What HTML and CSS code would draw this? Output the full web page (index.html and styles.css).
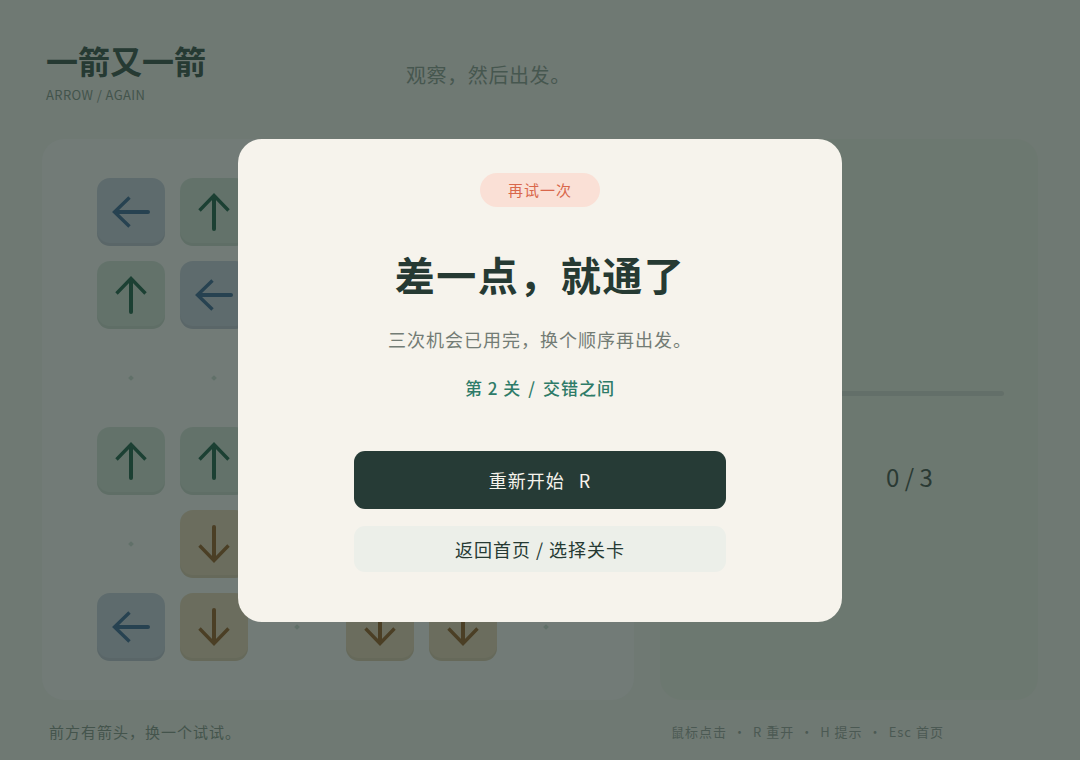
FILE: index.html
```html
<!DOCTYPE html>
<html lang="zh-CN">
  <head>
    <meta charset="UTF-8" />
    <meta name="viewport" content="width=device-width, initial-scale=1.0" />
    <title>一箭又一箭</title>
    <link rel="stylesheet" href="styles.css">
  </head>
  <body>
    <svg class="sprites" aria-hidden="true">
      <symbol id="arrow" viewBox="0 0 40 40">
        <path d="M20 37V5" fill="none" stroke="currentColor" stroke-width="4" stroke-linecap="round" />
        <path d="M5.5 18.5 20 3.5 34.5 18.5" fill="none" stroke="currentColor" stroke-width="3.4" stroke-linejoin="miter" />
      </symbol>
    </svg>

    <div class="app">
      <header class="top-bar">
        <div class="brand">
          <h1>一箭又一箭</h1>
          <p class="brand-sub">ARROW / AGAIN</p>
        </div>
        <p class="tagline">观察，然后出发。</p>
      </header>

      <main class="stage">
        <section class="board-panel">
          <div class="board">
            <!-- row 1 -->
            <div class="cell left"><svg class="arrow"><use href="#arrow" /></svg></div>
            <div class="cell up"><svg class="arrow"><use href="#arrow" /></svg></div>
            <div class="cell right"><svg class="arrow"><use href="#arrow" /></svg></div>
            <div class="cell down"><svg class="arrow"><use href="#arrow" /></svg></div>
            <div class="cell empty"></div>
            <div class="cell up"><svg class="arrow"><use href="#arrow" /></svg></div>
            <!-- row 2 -->
            <div class="cell up"><svg class="arrow"><use href="#arrow" /></svg></div>
            <div class="cell left"><svg class="arrow"><use href="#arrow" /></svg></div>
            <div class="cell empty"></div>
            <div class="cell right"><svg class="arrow"><use href="#arrow" /></svg></div>
            <div class="cell left"><svg class="arrow"><use href="#arrow" /></svg></div>
            <div class="cell empty"></div>
            <!-- row 3 -->
            <div class="cell empty"></div>
            <div class="cell empty"></div>
            <div class="cell down"><svg class="arrow"><use href="#arrow" /></svg></div>
            <div class="cell empty"></div>
            <div class="cell up"><svg class="arrow"><use href="#arrow" /></svg></div>
            <div class="cell right"><svg class="arrow"><use href="#arrow" /></svg></div>
            <!-- row 4 -->
            <div class="cell up"><svg class="arrow"><use href="#arrow" /></svg></div>
            <div class="cell up"><svg class="arrow"><use href="#arrow" /></svg></div>
            <div class="cell empty"></div>
            <div class="cell left"><svg class="arrow"><use href="#arrow" /></svg></div>
            <div class="cell empty"></div>
            <div class="cell down"><svg class="arrow"><use href="#arrow" /></svg></div>
            <!-- row 5 -->
            <div class="cell empty"></div>
            <div class="cell down"><svg class="arrow"><use href="#arrow" /></svg></div>
            <div class="cell right"><svg class="arrow"><use href="#arrow" /></svg></div>
            <div class="cell empty"></div>
            <div class="cell up"><svg class="arrow"><use href="#arrow" /></svg></div>
            <div class="cell empty"></div>
            <!-- row 6 -->
            <div class="cell left"><svg class="arrow"><use href="#arrow" /></svg></div>
            <div class="cell down"><svg class="arrow"><use href="#arrow" /></svg></div>
            <div class="cell empty"></div>
            <div class="cell down"><svg class="arrow"><use href="#arrow" /></svg></div>
            <div class="cell down"><svg class="arrow"><use href="#arrow" /></svg></div>
            <div class="cell empty"></div>
          </div>
        </section>

        <aside class="side-panel">
          <p class="level-tag">第 2 关</p>
          <h3 class="level-name">交错之间</h3>
          <p class="level-desc">先看清，再出手。</p>
          <div class="progress"><div class="progress-fill" style="width: 0%"></div></div>
          <div class="stat-row">
            <span class="stat-label">剩余机会</span>
            <span class="stat-value">0 / 3</span>
          </div>
        </aside>
      </main>

      <footer class="bottom-bar">
        <p class="hint">前方有箭头，换一个试试。</p>
        <p class="keys">鼠标点击<span class="dot">·</span>R 重开<span class="dot">·</span>H 提示<span class="dot">·</span>Esc 首页</p>
      </footer>
    </div>

    <div class="overlay">
      <div class="result-card">
        <span class="badge">再试一次</span>
        <h2>差一点，就通了</h2>
        <p class="result-text">三次机会已用完，换个顺序再出发。</p>
        <p class="result-level">第 2 关<span class="slash">/</span>交错之间</p>
        <button class="btn btn-primary">重新开始<span class="key">R</span></button>
        <button class="btn btn-secondary">返回首页 / 选择关卡</button>
      </div>
    </div>
  </body>
</html>
```

FILE: styles.css
```css
* {
  box-sizing: border-box;
}

body {
  margin: 0;
  background: #cad2cc;
  font-family: "Noto Sans CJK SC", "Noto Sans", sans-serif;
  letter-spacing: 1px;
  color: #28483e;
}

.sprites {
  position: absolute;
  width: 0;
  height: 0;
  overflow: hidden;
}

.app {
  height: 760px;
  padding: 40px 42px 0;
  display: flex;
  flex-direction: column;
}

/* header */

.top-bar {
  display: flex;
  align-items: flex-start;
  gap: 200px;
  height: 99px;
  padding-left: 4px;
}

.brand h1 {
  margin: 0;
  font-size: 32px;
  line-height: 40px;
  font-weight: 700;
  letter-spacing: 0;
  color: #28483e;
}

.brand-sub {
  margin: 6px 0 0;
  font-size: 13px;
  line-height: 18px;
  letter-spacing: 0.4px;
  color: #698276;
}

.tagline {
  margin: 21px 0 0;
  font-size: 20px;
  line-height: 28px;
  letter-spacing: 0.6px;
  color: #70877c;
}

/* main area */

.stage {
  display: grid;
  grid-template-columns: 592px 378px;
  gap: 26px;
  height: 561px;
}

.board-panel {
  background: #d0d7d5;
  border-radius: 22px;
  display: flex;
  align-items: center;
  justify-content: center;
}

.board {
  display: grid;
  grid-template-columns: repeat(6, 68px);
  grid-auto-rows: 68px;
  gap: 15px;
}

.cell {
  border-radius: 13px;
  display: flex;
  align-items: center;
  justify-content: center;
  box-shadow: inset 0 -3px 0 rgba(0, 0, 0, 0.05);
}

.cell .arrow {
  width: 40px;
  height: 40px;
  overflow: visible;
}

.cell.up {
  background: #b0c4b9;
  color: #12553f;
}

.cell.left {
  background: #a4b3be;
  color: #2a5a80;
}

.cell.left .arrow {
  transform: rotate(-90deg);
}

.cell.down {
  background: #c0b99e;
  color: #7a5220;
}

.cell.down .arrow {
  transform: rotate(180deg);
}

.cell.right {
  background: #cdb6bc;
  color: #8e4458;
}

.cell.right .arrow {
  transform: rotate(90deg);
}

.cell.empty {
  box-shadow: none;
}

.cell.empty::after {
  content: "";
  width: 4px;
  height: 4px;
  background: #abbfb6;
  transform: rotate(45deg);
}

/* side panel */

.side-panel {
  background: #c4d0c5;
  border-radius: 22px;
  padding: 34px;
}

.level-tag {
  margin: 0;
  font-size: 13px;
  line-height: 20px;
  color: #698276;
}

.level-name {
  margin: 8px 0 0;
  font-size: 28px;
  line-height: 38px;
  color: #28483e;
}

.level-desc {
  margin: 12px 0 0;
  font-size: 15px;
  line-height: 24px;
  color: #70877c;
}

.progress {
  margin-top: 116px;
  height: 5px;
  border-radius: 3px;
  background: #b0bcb5;
  overflow: hidden;
}

.progress-fill {
  height: 100%;
  background: #22775b;
}

.stat-row {
  display: grid;
  grid-template-columns: 192px 1fr;
  align-items: center;
  margin-top: 64px;
}

.stat-label {
  font-size: 14px;
  color: #70877c;
}

.stat-value {
  font-size: 24px;
  line-height: 34px;
  letter-spacing: 0;
  color: #314840;
}

/* footer */

.bottom-bar {
  display: grid;
  grid-template-columns: 592px 378px;
  gap: 26px;
  padding-top: 22px;
}

.hint {
  margin: 0;
  padding-left: 7px;
  font-size: 15px;
  line-height: 20px;
  color: #6b8276;
}

.keys {
  margin: 0;
  padding-left: 11px;
  font-size: 13px;
  line-height: 20px;
  color: #7b8d85;
}

.keys .dot {
  margin: 0 6px;
}

/* result dialog */

.overlay {
  position: fixed;
  inset: 0;
  background: rgba(36, 48, 42, 0.55);
  display: flex;
  align-items: center;
  justify-content: center;
}

.result-card {
  width: 604px;
  padding: 34px 48px 50px;
  background: #f6f3ec;
  border-radius: 24px;
  display: flex;
  flex-direction: column;
  align-items: center;
  text-align: center;
}

.badge {
  padding: 7px 28px;
  border-radius: 999px;
  background: #fae0d6;
  color: #d9674b;
  font-size: 15px;
  line-height: 20px;
}

.result-card h2 {
  margin: 43px 0 0;
  font-size: 40px;
  line-height: 48px;
  font-weight: 700;
  letter-spacing: 1.5px;
  color: #263a33;
}

.result-text {
  margin: 27px 0 0;
  font-size: 18px;
  line-height: 28px;
  color: #737c75;
}

.result-level {
  margin: 23px 0 0;
  font-size: 17px;
  line-height: 24px;
  font-weight: 500;
  color: #2e7b68;
}

.result-level .slash {
  margin: 0 7px;
}

.btn {
  width: 372px;
  border: none;
  border-radius: 11px;
  font-family: inherit;
  font-size: 18px;
  letter-spacing: 1px;
  cursor: pointer;
}

.btn-primary {
  margin-top: 51px;
  height: 58px;
  background: #263b36;
  color: #f6f3ec;
}

.btn-primary .key {
  margin-left: 14px;
}

.btn-secondary {
  margin-top: 17px;
  height: 46px;
  background: #ecefe9;
  color: #263a33;
  font-weight: 400;
}
```
